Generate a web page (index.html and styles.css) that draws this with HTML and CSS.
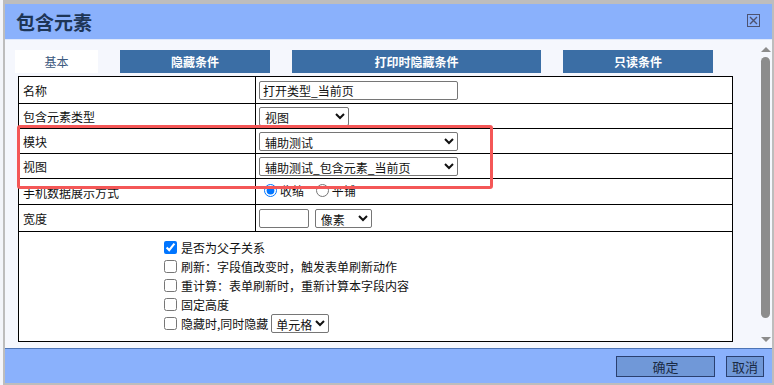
FILE: index.html
```html
<!DOCTYPE html>
<html>

<head>
    <meta charset="utf-8">
    <title>包含元素</title>
    <link rel="stylesheet" href="styles.css">
</head>

<body>
    <div class="dialog">
        <!-- 标题栏 -->
        <div class="titlebar">
            <span class="title">包含元素</span>
            <span class="close">
                <svg width="13" height="13" viewBox="0 0 13 13">
                    <rect x="0.5" y="0.5" width="12" height="12" fill="none" stroke="#4d5270" stroke-width="1"/>
                    <path d="M3 3 L10 10 M10 3 L3 10" stroke="#4d5270" stroke-width="1.4"/>
                </svg>
            </span>
        </div>

        <div class="body">
            <div class="content">
                <!-- 页签 -->
                <div class="tabs">
                    <div class="tab tab-on">基本</div>
                    <div class="tab tab-mid">隐藏条件</div>
                    <div class="tab tab-wide">打印时隐藏条件</div>
                    <div class="tab tab-mid">只读条件</div>
                </div>

                <table class="form">
                    <colgroup>
                        <col class="col-label">
                        <col>
                    </colgroup>
                    <tr class="row-a">
                        <td class="label">名称</td>
                        <td class="field"><input class="txt txt-long" type="text" value="打开类型_当前页"></td>
                    </tr>
                    <tr class="row-b">
                        <td class="label">包含元素类型</td>
                        <td class="field">
                            <select class="sel sel-short">
                                <option>视图</option>
                            </select>
                        </td>
                    </tr>
                    <tr class="row-b">
                        <td class="label">模块</td>
                        <td class="field">
                            <select class="sel sel-long">
                                <option>辅助测试</option>
                            </select>
                        </td>
                    </tr>
                    <tr class="row-b">
                        <td class="label">视图</td>
                        <td class="field">
                            <select class="sel sel-long">
                                <option>辅助测试_包含元素_当前页</option>
                            </select>
                        </td>
                    </tr>
                    <tr class="row-c">
                        <td class="label">手机数据展示方式</td>
                        <td class="field">
                            <label class="radio"><input type="radio" name="mode" checked>收缩</label>
                            <label class="radio"><input type="radio" name="mode">平铺</label>
                        </td>
                    </tr>
                    <tr class="row-a">
                        <td class="label">宽度</td>
                        <td class="field">
                            <input class="txt txt-short" type="text">
                            <select class="sel sel-unit">
                                <option>像素</option>
                            </select>
                        </td>
                    </tr>
                    <tr>
                        <td class="checks" colspan="2">
                            <label class="check"><input type="checkbox" checked>是否为父子关系</label>
                            <label class="check"><input type="checkbox">刷新：字段值改变时，触发表单刷新动作</label>
                            <label class="check"><input type="checkbox">重计算：表单刷新时，重新计算本字段内容</label>
                            <label class="check"><input type="checkbox">固定高度</label>
                            <label class="check"><input type="checkbox">隐藏时,同时隐藏
                                <select class="sel sel-cell">
                                    <option>单元格</option>
                                </select>
                            </label>
                        </td>
                    </tr>
                </table>

                <!-- 红色标注框 -->
                <div class="mark"></div>
            </div>

            <!-- 滚动条 -->
            <div class="scrollbar">
                <div class="arrow-up"></div>
                <div class="thumb"></div>
                <div class="arrow-down"></div>
            </div>
        </div>

        <div class="footer">
            <button class="btn btn-ok">确定</button>
            <button class="btn">取消</button>
        </div>
    </div>
</body>

</html>
```

FILE: styles.css
```css
* {
    box-sizing: border-box;
}

body {
    margin: 0;
    background-color: #f3f5fa;
    font-family: "Noto Sans CJK SC", "Liberation Sans", sans-serif;
    font-size: 12px;
    color: #111;
}

.dialog {
    width: 771px;
    height: 385px;
    margin-left: 3px;
    border-left: 2px solid #bdbdbd;
    border-right: 2px solid #bdbdbd;
    border-top: 4px solid #bdbdbd;
    border-bottom: 2px solid #bdbdbd;
    display: flex;
    flex-direction: column;
}

.titlebar {
    height: 36px;
    background-color: #8ab1fc;
    border-bottom: 1px solid #dfe8fb;
    display: flex;
    align-items: center;
    justify-content: space-between;
    padding: 0 12px 0 11px;
}

.title {
    font-size: 19px;
    font-weight: bold;
    color: #1d3556;
    line-height: 24px;
}

.close {
    display: flex;
    margin-top: -2px;
}

.body {
    height: 308px;
    background-color: #f5f7fd;
    display: flex;
    position: relative;
}

.content {
    flex: 1;
    padding: 10px 0 0 10px;
    position: relative;
}

.tabs {
    display: flex;
    gap: 22px;
    height: 23px;
}

.tab {
    background-color: #3b6ea5;
    color: #fff;
    font-weight: bold;
    text-align: center;
    line-height: 23px;
}

.tab-on {
    width: 83px;
    background-color: #fff;
    color: #3d5a80;
    font-weight: normal;
}

.tab-mid {
    width: 150px;
}

.tab-wide {
    width: 249px;
}

.form {
    margin: 3px 0 0 3px;
    width: 715px;
    border-collapse: collapse;
    table-layout: fixed;
    background-color: #fff;
}

.col-label {
    width: 237px;
}

.form td {
    border: 1px solid #000;
    padding: 0;
    vertical-align: middle;
}

.row-a {
    height: 27px;
}

.row-b {
    height: 25px;
}

.row-c {
    height: 26px;
}

.label {
    padding: 2px 0 0 4px !important;
    line-height: 16px;
}

.field {
    padding: 0 3px !important;
    line-height: 16px;
}

.txt {
    height: 19px;
    border: 1px solid #767676;
    border-radius: 2px;
    padding: 0 3px;
    font-family: "Noto Sans CJK SC", sans-serif;
    font-size: 12px;
    color: #111;
    vertical-align: middle;
}

.txt-long {
    width: 199px;
}

.txt-short {
    width: 50px;
}

.sel {
    height: 19px;
    border: 1px solid #767676;
    border-radius: 2px;
    font-family: "Noto Sans CJK SC", sans-serif;
    font-size: 12px;
    color: #111;
    background-color: #fff;
    vertical-align: middle;
    padding: 0 0 0 1px;
}

.sel-short {
    width: 90px;
}

.sel-long {
    width: 199px;
}

.sel-unit {
    width: 57px;
    margin-left: 3px;
}

.sel-cell {
    width: 58px;
    padding: 0;
    margin-left: 3px;
}

.radio {
    display: inline-flex;
    align-items: center;
    margin-right: 4px;
}

.radio input {
    margin: 0 3px 0 5px;
}

.checks {
    height: 104px;
    padding: 6px 0 8px 145px !important;
    vertical-align: top !important;
}

.check {
    display: flex;
    align-items: center;
    height: 19px;
}

.check input {
    margin: 0 4px 0 0;
}

.mark {
    position: absolute;
    left: 12px;
    top: 85px;
    width: 476px;
    height: 64px;
    border: 3px solid #f45757;
    border-radius: 3px;
}

.scrollbar {
    width: 12px;
    position: relative;
}

.arrow-up {
    position: absolute;
    top: 7px;
    left: 1px;
    width: 0;
    height: 0;
    border-left: 5px solid transparent;
    border-right: 5px solid transparent;
    border-bottom: 5px solid #8c8c8c;
}

.thumb {
    position: absolute;
    top: 17px;
    left: 1px;
    width: 9px;
    height: 261px;
    background-color: #8c8c8c;
    border-radius: 5px;
}

.arrow-down {
    position: absolute;
    top: 297px;
    left: 1px;
    width: 0;
    height: 0;
    border-left: 5px solid transparent;
    border-right: 5px solid transparent;
    border-top: 5px solid #8c8c8c;
}

.footer {
    flex: 1;
    background-color: #8ab1fc;
    border-top: 1px solid #4d74b5;
    display: flex;
    justify-content: flex-end;
    gap: 11px;
    padding: 7px 8px 0 0;
}

.btn {
    height: 21px;
    width: 38px;
    padding: 0;
    background-color: #7098d8;
    border: 1px solid #2a4070;
    font-family: "Noto Sans CJK SC", sans-serif;
    font-size: 13px;
    color: #1a2a44;
    line-height: 18px;
}

.btn-ok {
    width: 99px;
}
```
